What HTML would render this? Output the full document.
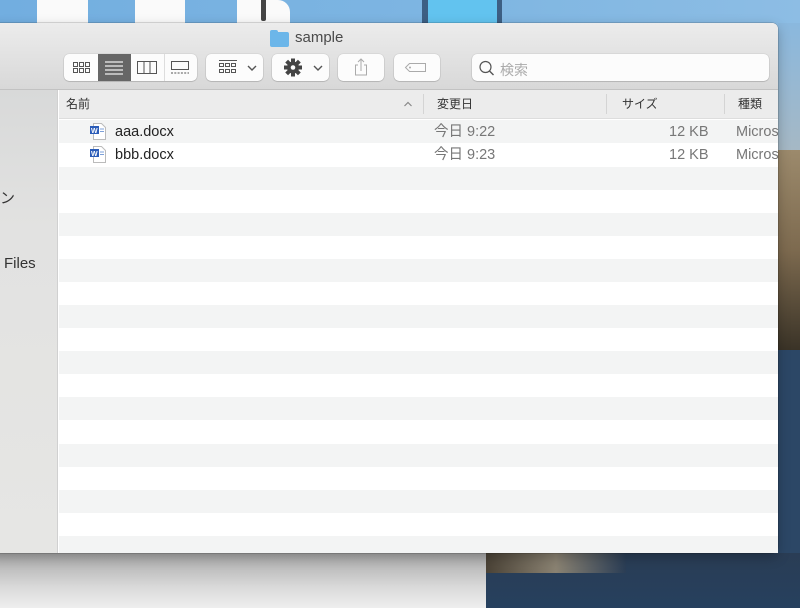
<!DOCTYPE html>
<html><head><meta charset="utf-8">
<style>
*{margin:0;padding:0;box-sizing:border-box}
body{width:800px;height:608px;overflow:hidden;position:relative;background:#7db2df;font-family:"Liberation Sans","Noto Sans CJK JP",sans-serif}
.abs{position:absolute}
.btn{position:absolute;top:54px;height:27px;background:#fcfcfc;border-radius:5px;box-shadow:0 0.5px 1px rgba(0,0,0,.25),0 0 0 0.5px rgba(0,0,0,.08)}
.hdr{position:absolute;top:90px;height:28px;font-size:12px;color:#333;line-height:28px}
.row{position:absolute;left:59px;width:719px;height:23px;font-size:14px;line-height:23px;color:#222}
.g{background:#f3f4f4}
</style></head><body>
<div class="abs" style="left:0;top:0;width:800px;height:30px;background:linear-gradient(90deg,#72aee0,#7fb6e2 60%,#8dbde4)"></div>
<div class="abs" style="left:37px;top:0;width:51px;height:25px;background:#fafafa"></div>
<div class="abs" style="left:135px;top:0;width:50px;height:25px;background:#fafafa"></div>
<div class="abs" style="left:237px;top:0;width:53px;height:25px;background:#fafafa;border-radius:0 12px 0 0"></div>
<div class="abs" style="left:261px;top:0;width:5px;height:21px;background:#444;border-radius:0 0 2px 2px"></div>
<div class="abs" style="left:422px;top:0;width:80px;height:25px;background:#3d5f83"></div>
<div class="abs" style="left:428px;top:0;width:69px;height:25px;background:#62c3ef"></div>
<div class="abs" style="left:778px;top:23px;width:22px;height:130px;background:linear-gradient(180deg,#8ab8de,#a6b8c4)"></div>
<div class="abs" style="left:778px;top:150px;width:22px;height:200px;background:linear-gradient(180deg,#9c8a6c,#7d6a4f 50%,#3a3327)"></div>
<div class="abs" style="left:778px;top:350px;width:22px;height:258px;background:#2c4766"></div>
<div class="abs" style="left:0;top:553px;width:486px;height:55px;background:linear-gradient(180deg,#a8a8a8,#d8d8d8 60%,#eeeeee)"></div>
<div class="abs" style="left:486px;top:553px;width:314px;height:55px;background:linear-gradient(180deg,#2a3d55,#26405e)"></div>
<div class="abs" style="left:486px;top:553px;width:140px;height:20px;background:linear-gradient(90deg,#4a4236,#8a8272 50%,#2a3d55)"></div>
<div class="abs" style="left:-10px;top:23px;width:788px;height:530px;background:#fff;border-radius:0 6px 6px 0;box-shadow:0 0 0 0.5px rgba(0,0,0,.25),0 4px 12px rgba(0,0,0,.25);overflow:hidden">
  <div class="abs" style="left:0;top:0;width:788px;height:67px;background:linear-gradient(180deg,#ececec,#d8d8d8);border-bottom:1px solid #c2c2c2"></div>
</div>
<div class="abs" style="left:270px;top:32px;width:19px;height:15px;background:#6cb6e9;border-radius:2px"></div>
<div class="abs" style="left:270px;top:30px;width:8px;height:4px;background:#6cb6e9;border-radius:2px 2px 0 0"></div>
<div class="abs" style="left:295px;top:29px;font-size:15px;color:#4a4a4a">sample</div>
<div class="btn" style="left:64px;width:133px;overflow:hidden">
  <div class="abs" style="left:34px;top:0;width:33px;height:27px;background:#666"></div>
  <div class="abs" style="left:100px;top:0;width:1px;height:27px;background:#ddd"></div>
  <svg class="abs" style="left:0;top:0" width="133" height="27">
    <g fill="none" stroke="#555" stroke-width="1">
      <rect x="9.5" y="8.5" width="4" height="4"/><rect x="15.5" y="8.5" width="4" height="4"/><rect x="21.5" y="8.5" width="4" height="4"/>
      <rect x="9.5" y="14.5" width="4" height="4"/><rect x="15.5" y="14.5" width="4" height="4"/><rect x="21.5" y="14.5" width="4" height="4"/>
      <rect x="73.5" y="7.5" width="19" height="12"/><line x1="80" y1="8" x2="80" y2="19"/><line x1="86" y1="8" x2="86" y2="19"/>
      <rect x="107.5" y="7.5" width="17" height="8"/>
    </g>
    <g stroke="#eee" stroke-width="1.3"><line x1="41" y1="8" x2="59" y2="8"/><line x1="41" y1="12" x2="59" y2="12"/><line x1="41" y1="16" x2="59" y2="16"/><line x1="41" y1="20" x2="59" y2="20"/></g>
    <line x1="107" y1="19" x2="125" y2="19" stroke="#555" stroke-dasharray="2 1.3"/>
  </svg>
</div>
<div class="btn" style="left:206px;width:57px">
  <svg class="abs" style="left:0;top:0" width="57" height="27"><g fill="none" stroke="#555" stroke-width="1">
    <line x1="13" y1="6.5" x2="31" y2="6.5"/>
    <rect x="13.5" y="9.5" width="4" height="3"/><rect x="19.5" y="9.5" width="4" height="3"/><rect x="25.5" y="9.5" width="4" height="3"/>
    <rect x="13.5" y="15.5" width="4" height="3"/><rect x="19.5" y="15.5" width="4" height="3"/><rect x="25.5" y="15.5" width="4" height="3"/>
    <path d="M42 12l4 4 4-4" stroke-width="1.4"/></g></svg>
</div>
<div class="btn" style="left:272px;width:57px">
  <svg class="abs" style="left:0;top:0" width="57" height="27">
    <g transform="translate(21,13.5)" fill="#444">
      <circle r="6"/>
      <g><rect x="-2" y="-9" width="4" height="18"/><rect x="-2" y="-9" width="4" height="18" transform="rotate(45)"/><rect x="-2" y="-9" width="4" height="18" transform="rotate(90)"/><rect x="-2" y="-9" width="4" height="18" transform="rotate(135)"/></g>
      <circle r="2.3" fill="#fcfcfc"/>
    </g>
    <path d="M42 12l4 4 4-4" fill="none" stroke="#555" stroke-width="1.4"/></svg>
</div>
<div class="btn" style="left:338px;width:46px">
  <svg class="abs" style="left:0;top:0" width="46" height="27"><g fill="none" stroke="#aaa" stroke-width="1">
    <path d="M20 11h-2.5v10h11v-10h-2.5"/><path d="M23 17V5M20 8l3-3 3 3"/></g></svg>
</div>
<div class="btn" style="left:394px;width:46px">
  <svg class="abs" style="left:0;top:0" width="46" height="27"><path d="M15.5 9.5h16v8h-16l-4-4z" fill="none" stroke="#aaa"/><circle cx="16" cy="13.5" r="1" fill="#aaa"/></svg>
</div>
<div class="btn" style="left:472px;width:297px">
  <svg class="abs" style="left:6px;top:5px" width="18" height="18"><circle cx="7.5" cy="8" r="5.5" fill="none" stroke="#555" stroke-width="1.2"/><line x1="11.5" y1="12" x2="15.5" y2="16" stroke="#555" stroke-width="1.4"/></svg>
  <div class="abs" style="left:28px;top:6px;font-size:14px;color:#aaa">検索</div>
</div>
<div class="abs" style="left:0;top:90px;width:58px;height:463px;background:linear-gradient(180deg,#d8d9d9,#e2e2e1 30%,#e6e6e4);border-right:1px solid #d0d0d0"></div>
<div class="abs" style="left:0;top:187px;font-size:15px;color:#333">ン</div>
<div class="abs" style="left:4px;top:255px;font-size:15px;color:#333">Files</div>
<div class="abs" style="left:59px;top:90px;width:719px;height:29px;background:#ececec;border-bottom:1px solid #ddd"></div>
<div class="hdr" style="left:66px">名前</div>
<svg class="abs" style="left:403px;top:100px" width="10" height="8"><path d="M1.5 6l3.5-3.5 3.5 3.5" fill="none" stroke="#888" stroke-width="1.2"/></svg>
<div class="abs" style="left:423px;top:94px;width:1px;height:20px;background:#d4d4d4"></div>
<div class="hdr" style="left:437px">変更日</div>
<div class="abs" style="left:606px;top:94px;width:1px;height:20px;background:#d4d4d4"></div>
<div class="hdr" style="left:622px">サイズ</div>
<div class="abs" style="left:724px;top:94px;width:1px;height:20px;background:#d4d4d4"></div>
<div class="hdr" style="left:738px">種類</div>
<div class="row g" style="top:120px"></div>
<div class="row g" style="top:167px"></div>
<div class="row g" style="top:213px"></div>
<div class="row g" style="top:259px"></div>
<div class="row g" style="top:305px"></div>
<div class="row g" style="top:351px"></div>
<div class="row g" style="top:397px"></div>
<div class="row g" style="top:444px"></div>
<div class="row g" style="top:490px"></div>
<div class="row g" style="top:536px;height:17px"></div>
<div class="abs" style="left:59px;top:121px;width:719px;height:46px;overflow:hidden;font-size:14.5px;line-height:23px;color:#222">
  <div class="abs" style="left:56px;top:0">aaa.docx</div>
  <div class="abs" style="left:56px;top:23px">bbb.docx</div>
  <div class="abs" style="left:375px;top:0;color:#777">今日 9:22</div>
  <div class="abs" style="left:375px;top:23px;color:#777">今日 9:23</div>
  <div class="abs" style="left:610px;top:0;color:#777">12 KB</div>
  <div class="abs" style="left:610px;top:23px;color:#777">12 KB</div>
  <div class="abs" style="left:677px;top:0;color:#777">Microsoft</div>
  <div class="abs" style="left:677px;top:23px;color:#777">Microsoft</div>
</div>
<svg class="abs" style="left:90px;top:123px" width="18" height="42">
  <g><path d="M3.5 0.5h8l4 4v12h-12z" fill="#fff" stroke="#bbb"/><rect x="0" y="3" width="9" height="8" fill="#2b5cb8"/><text x="1" y="10" font-size="7" fill="#fff" font-family="Liberation Sans" font-weight="bold">W</text><line x1="10" y1="6" x2="14" y2="6" stroke="#7da0d8"/><line x1="10" y1="8.5" x2="14" y2="8.5" stroke="#7da0d8"/></g>
  <g transform="translate(0,23)"><path d="M3.5 0.5h8l4 4v12h-12z" fill="#fff" stroke="#bbb"/><rect x="0" y="3" width="9" height="8" fill="#2b5cb8"/><text x="1" y="10" font-size="7" fill="#fff" font-family="Liberation Sans" font-weight="bold">W</text><line x1="10" y1="6" x2="14" y2="6" stroke="#7da0d8"/><line x1="10" y1="8.5" x2="14" y2="8.5" stroke="#7da0d8"/></g>
</svg>
</body></html>
